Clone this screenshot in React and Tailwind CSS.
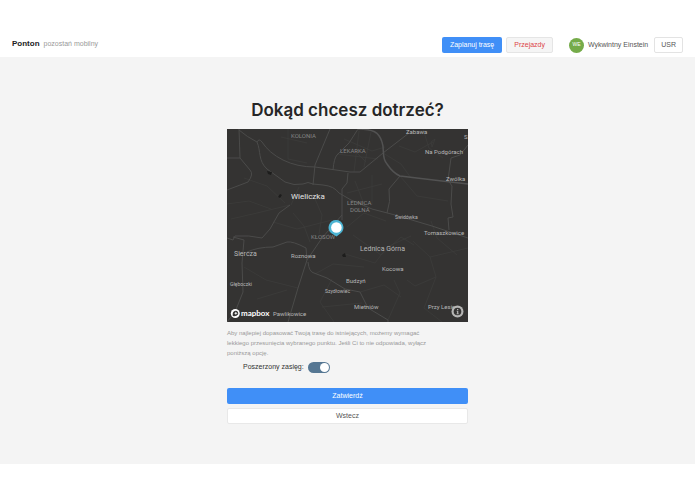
import { useState } from 'react'

const ROADS = [
	'M12 1 Q20 8 30 13 Q32 9 35 13 Q42 24 56 31 T88 38 L123 43 H133 L156 24 L182 4',
	'M30 13 C34 22 31 32 40 40 L58 53 Q67 57 76 55 Q81 52 86 55 L96 56 Q107 57 112 64 L124 71',
	'M103 0 L88 36 L86 56',
	'M12 0 L13 29 H0 M13 29 L23 41 Q27 45 21 53 L0 61',
	'M106 41 Q107 29 110 26 L122 14 L131 0',
	'M173 47 L162 60 Q164 73 160 84',
	'M241 16 L233 26 L224 29 L221 51 L225 57 L224 75 L226 88 L221 89 L222 101',
	'M121 44 L120 54 L115 60 V91',
	'M124 71 L145 80 L168 86 L205 97 L241 109',
	'M63 76 L52 84 L43 100 L35 109 Q22 106 8 107 L6 111 L0 109',
	'M6 108 L17 111 L15 134 L16 163 L8 183 L0 193',
	'M20 123 Q31 118 46 118 L60 113 Q66 112 79 119 L80 131',
	'M115 86 L95 109 L80 131 L71 159 L61 193',
	'M81 133 Q82 143 87 144 L100 149 L118 160 L133 163 L141 179 L161 191 V193',
]

const LANES = [
	'M61 0 V30 L80 34 M54 8 L80 14 M17 49 L40 57 L58 74 M0 75 L22 72 L44 80 M4 90 L30 84 L63 76',
	'M117 10 L145 22 L158 18 M125 19 L139 33 M110 25 L151 30 M132 2 L127 43 M144 3 L137 38',
	'M128 52 L138 78 M120 64 L155 55 M145 46 V76 M173 47 L190 67 L221 72',
	'M156 24 L174 35 L184 49 M172 17 L188 23 L206 13 M196 0 L202 19 L216 29 M204 13 L208 10 L205 18 Z',
	'M66 84 L77 97 L83 113 M46 93 L70 100 L105 91 M88 70 L95 86 L92 105 M72 58 L64 76',
	'M120 98 L137 84 L159 92 M126 106 L154 126 L174 108 L187 116 M118 125 L148 134 L160 118 L184 107',
	'M186 112 L203 128 L241 119 M203 128 L209 148 L188 157 L180 151 M209 148 L197 179 L215 193',
	'M17 138 L39 151 L71 159 M30 170 L60 161 M105 150 L93 173 L107 193 M161 191 L173 164 L167 151',
	'M133 163 L157 156 L174 168 M88 145 L106 135 L137 138 M95 178 L135 174 M204 92 L210 109 L230 126',
]

const LABELS = [
	{ name: 'KOLONIA', x: 64, y: 9, size: 6, kind: 'district' },
	{ name: 'LEKARKA', x: 113, y: 24, size: 6, kind: 'district' },
	{ name: 'Zabawa', x: 179, y: 5, size: 6, kind: 'village' },
	{ name: 'S', x: 237, y: 10, size: 6, kind: 'village' },
	{ name: 'Na Podgórach', x: 198, y: 25, size: 6, kind: 'village' },
	{ name: 'Zwólka', x: 219, y: 52, size: 6, kind: 'village' },
	{ name: 'Wieliczka', x: 64, y: 70, size: 8, kind: 'town' },
	{ name: 'LEDNICA', x: 120, y: 76, size: 6, kind: 'district' },
	{ name: 'DOLNA', x: 123, y: 83, size: 6, kind: 'district' },
	{ name: 'Świdówka', x: 168, y: 90, size: 5, kind: 'village' },
	{ name: 'Tomaszkowice', x: 197, y: 106, size: 6, kind: 'village' },
	{ name: 'KŁOSÓW', x: 84, y: 110, size: 6, kind: 'district' },
	{ name: 'Siercza', x: 7, y: 127, size: 7, kind: 'village' },
	{ name: 'Roznowa', x: 64, y: 129, size: 6, kind: 'village' },
	{ name: 'Lednica Górna', x: 133, y: 122, size: 7, kind: 'village' },
	{ name: 'Kocowa', x: 155, y: 142, size: 6, kind: 'village' },
	{ name: 'Budzyń', x: 119, y: 154, size: 6, kind: 'village' },
	{ name: 'Głęboczki', x: 3, y: 157, size: 5, kind: 'village' },
	{ name: 'Szydłowiec', x: 98, y: 164, size: 5, kind: 'village' },
	{ name: 'Mietniów', x: 127, y: 180, size: 6, kind: 'village' },
	{ name: 'Przy Lesie', x: 201, y: 180, size: 6, kind: 'village' },
	{ name: 'Pawlikowice', x: 46, y: 187, size: 6, kind: 'village' },
]

const LABEL_FILL = {
	district: 'fill-[#858585]',
	village: 'fill-[#b8b8b8]',
	town: 'fill-[#e6e6e6]',
}

const Map = () => (
	<svg viewBox="0 0 241 193" className="block w-full bg-[#343332] font-['Roboto',sans-serif]">
		<g fill="none" stroke="#3d3d3c" strokeWidth="0.7">
			{LANES.map((d) => <path key={d} d={d} />)}
		</g>
		<g fill="none" stroke="#4b4b4a" strokeWidth="1">
			{ROADS.map((d) => <path key={d} d={d} />)}
		</g>
		<path
			d="M131 0 C146 0 152 3 155 13 C158 21 154 28 160 35 Q166 44 173 47 L215 52 L241 55"
			fill="none"
			stroke="#525252"
			strokeWidth="1.5"
		/>

		<g fill="#1d1d1c">
			<path d="M40 42 L45 43 L44 46 L41 45 Z" />
			<path d="M53 65 L55 66 L53 69 L51 68 Z" />
			<path d="M115 126 L118 124 L119 128 L116 128 Z" />
		</g>

		{LABELS.map(({ name, x, y, size, kind }) => (
			<text key={name} x={x} y={y} fontSize={size} className={LABEL_FILL[kind]}>{name}</text>
		))}

		{/* selected point */}
		<path d="M109 91 a7.5 7.5 0 0 1 5 13 L109.500 107.500 L104 104 A7.500 7.500 0 0 1 109 91 Z" fill="#4cb4d3" />
		<circle cx="109.400" cy="98.500" r="5.300" fill="#fff" />

		{/* mapbox mark */}
		<circle cx="8.300" cy="184.500" r="4.500" fill="#fff" />
		<path d="M5.800 187 Q5 182 8.700 181.700 A2.600 2.600 0 0 1 11 185.400 Q9.500 187.600 5.800 187 Z" fill="#343332" />
		<path d="M8.900 182.400 L9.400 183.700 L10.700 184.200 L9.400 184.800 L8.900 186 L8.300 184.800 L7 184.200 L8.300 183.700 Z" fill="#fff" />
		<text x="14" y="187" fontSize="8" className="fill-white font-['Lato',sans-serif] font-bold">mapbox</text>

		{/* attribution */}
		<circle cx="230.500" cy="182.500" r="6" fill="#b5b5b4" />
		<circle cx="230.500" cy="182.500" r="3.800" fill="#343332" />
		<path d="M230 180 h1.300 v1 h-1.300 Z M229.600 181.700 h1.700 v2.800 h0.500 v0.700 h-2.300 v-0.700 h0.600 v-2 h-0.500 Z" fill="#b5b5b4" />
	</svg>
)

const NavBar = () => (
	<header className="flex h-[25px] items-center px-3 pt-px">
		<div className="flex items-baseline gap-1 pb-0.5">
			<a href="#" className="text-[8px] font-bold text-[#222]">Ponton</a>
			<span className="text-[7px] text-[#999]">pozostań mobilny</span>
		</div>

		<nav className="ml-auto flex items-center gap-1">
			<button className="h-4 rounded-xs bg-[#408ff7] px-2 text-[7px] text-white">Zaplanuj trasę</button>
			<button className="h-4 rounded-xs border border-[#e5e5e5] bg-[#f5f5f5] px-[7px] text-[7px] text-[#dc4446]">
				Przejazdy
			</button>
		</nav>

		<div className="ml-4 flex items-center">
			<span className="flex size-[15px] items-center justify-center rounded-full bg-[#75ab49] text-[5px] text-white">WE</span>
			<span className="ml-1 text-[7px] text-[#555]">Wykwintny Einstein</span>
			<button className="ml-1.5 h-4 rounded-xs border border-[#e3e3e3] bg-white px-1.5 text-[7px] text-[#555]">USR</button>
		</div>
	</header>
)

const App = () => {
	const [extended, setExtended] = useState(true)

	return (
		<div className="bg-white py-8 font-['Liberation_Sans',sans-serif]">
			<NavBar />

			<main className="flex flex-col items-center bg-[#f4f4f4] px-4 pt-[41px] pb-10">
				<h1 className="font-['Inter',sans-serif] text-[17px] leading-6 font-semibold whitespace-nowrap text-[#262626]">
					Dokąd chcesz dotrzeć?
				</h1>

				<div className="mt-[7px] w-full max-w-[241px]">
					<Map />

					<p className="mt-1.5 max-w-[200px] text-[6px] leading-[10px] text-[#999]">
						Aby najlepiej dopasować Twoją trasę do istniejących, możemy wymagać lekkiego
						przesunięcia wybranego punktu. Jeśli Ci to nie odpowiada, wyłącz poniższą opcję.
					</p>

					<label className="mt-[3px] ml-4 flex h-3 items-center gap-1 text-[7px] text-[#333]">
						Poszerzony zasięg:
						<input
							type="checkbox"
							role="switch"
							className="peer sr-only"
							checked={extended}
							onChange={(e) => setExtended(e.target.checked)}
						/>
						<span className="flex h-[11px] w-[22px] items-center rounded-full bg-[#b5b5b5] p-px peer-checked:justify-end peer-checked:bg-[#567793]">
							<span className="size-[9px] rounded-full bg-white" />
						</span>
					</label>

					<button className="mt-[15px] block h-4 w-full rounded-xs bg-[#408ff7] text-[7px] text-white">Zatwierdź</button>
					<button className="mt-1 block h-4 w-full rounded-xs border border-[#e8e8e8] bg-white text-[7px] text-[#555]">
						Wstecz
					</button>
				</div>
			</main>
		</div>
	)
}

export default App
